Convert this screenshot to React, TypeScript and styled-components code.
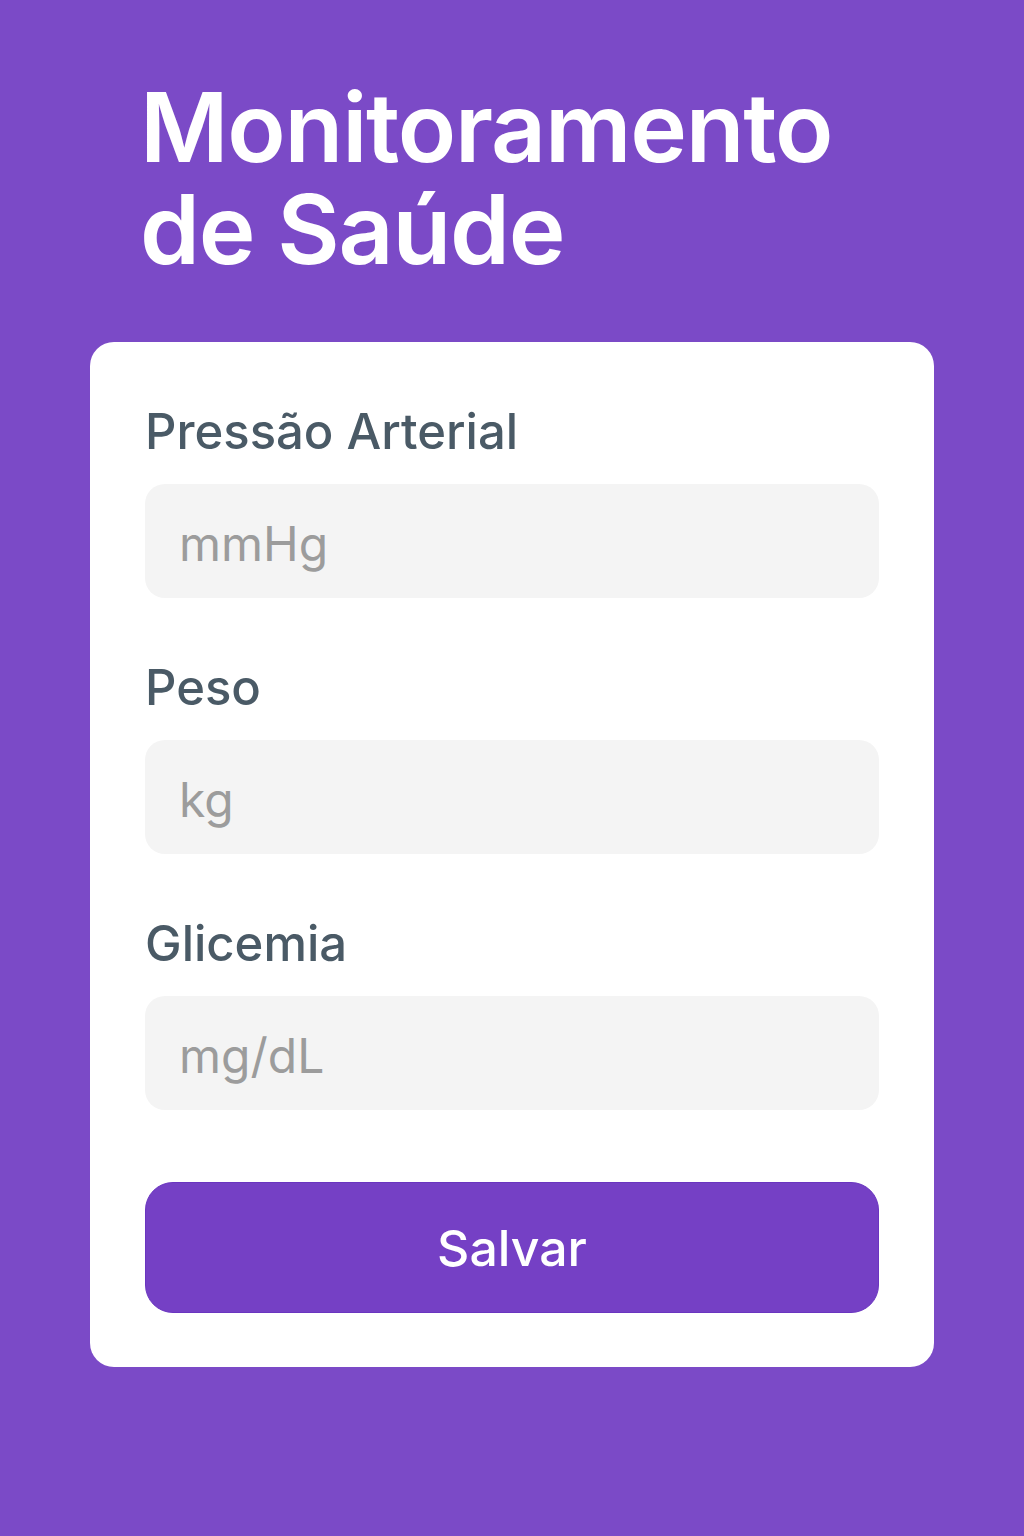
import React from 'react'
import styled, { createGlobalStyle } from 'styled-components'

const GlobalStyle = createGlobalStyle`
  html, body {
    margin: 0;
    padding: 0;
    background: #7b4ac7;
  }
  body {
    font-family: Inter, "Noto Sans", "Liberation Sans", sans-serif;
  }
`

const Page = styled.div`
  min-height: 1536px;
  box-sizing: border-box;
  padding: 76px 90px 0;
  background: #7b4ac7;
`

const Title = styled.h1`
  margin: 0 0 0 50px;
  color: #ffffff;
  font-size: 96px;
  line-height: 102px;
  font-weight: 600;
  letter-spacing: -1.2px;
`

const Card = styled.div`
  margin-top: 62px;
  background: #ffffff;
  border-radius: 24px;
  padding: 50px 55px 54px;
  display: flex;
  flex-direction: column;
`

const Field = styled.div`
  display: flex;
  flex-direction: column;
  margin-bottom: 50px;
`

const Label = styled.label`
  color: #4a5a66;
  font-size: 49px;
  font-weight: 500;
  line-height: 80px;
  margin-bottom: 12px;
`

const Input = styled.input`
  box-sizing: border-box;
  height: 114px;
  width: 100%;
  border: none;
  outline: none;
  border-radius: 20px;
  background: #f4f4f4;
  padding: 4px 34px 0;
  font-family: inherit;
  font-size: 48px;
  color: #333;

  &::placeholder {
    color: #9c9c9c;
  }
`

const SaveButton = styled.button`
  height: 131px;
  margin-top: 22px;
  border: 1.5px solid #6a35c0;
  border-radius: 28px;
  background: #7540c5;
  color: #ffffff;
  font-family: inherit;
  font-size: 50px;
  font-weight: 500;
  cursor: pointer;
`

const fields = [
  { label: 'Pressão Arterial', unit: 'mmHg' },
  { label: 'Peso', unit: 'kg' },
  { label: 'Glicemia', unit: 'mg/dL' },
]

const App: React.FC = () => {
  return (
    <>
      <GlobalStyle />
      <Page>
        <Title>
          Monitoramento
          <br />
          de Saúde
        </Title>
        <Card>
          {fields.map(f => (
            <Field key={f.label}>
              <Label>{f.label}</Label>
              <Input placeholder={f.unit} />
            </Field>
          ))}
          <SaveButton>Salvar</SaveButton>
        </Card>
      </Page>
    </>
  )
}

export default App
